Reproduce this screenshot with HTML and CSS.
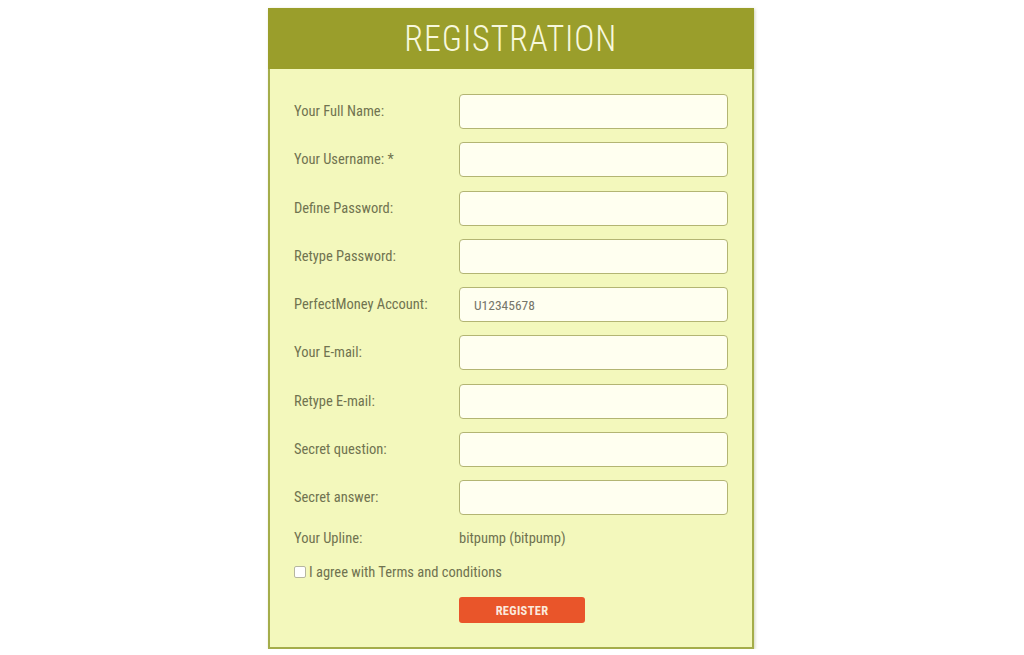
FILE: index.html
```html
<!DOCTYPE html>
<html lang="en">
<head>
  <meta charset="UTF-8" />
  <title>Registration</title>
  <link rel="stylesheet" href="styles.css">
</head>
<body>

  <div class="register-box">
    <div class="register-head">
      <h1>REGISTRATION</h1>
    </div>

    <form class="register-form">
      <div class="row">
        <label>Your Full Name:</label>
        <input type="text" class="field">
      </div>
      <div class="row">
        <label>Your Username: *</label>
        <input type="text" class="field">
      </div>
      <div class="row">
        <label>Define Password:</label>
        <input type="password" class="field">
      </div>
      <div class="row">
        <label>Retype Password:</label>
        <input type="password" class="field">
      </div>
      <div class="row">
        <label>PerfectMoney Account:</label>
        <input type="text" class="field" placeholder="U12345678">
      </div>
      <div class="row">
        <label>Your E-mail:</label>
        <input type="text" class="field">
      </div>
      <div class="row">
        <label>Retype E-mail:</label>
        <input type="text" class="field">
      </div>
      <div class="row">
        <label>Secret question:</label>
        <input type="text" class="field">
      </div>
      <div class="row">
        <label>Secret answer:</label>
        <input type="text" class="field">
      </div>
      <div class="row row-text">
        <label>Your Upline:</label>
        <span class="upline">bitpump (bitpump)</span>
      </div>

      <label class="agree">
        <input type="checkbox" class="check">
        <span>I agree with Terms and conditions</span>
      </label>

      <div class="row row-btn">
        <span></span>
        <button type="button" class="btn">REGISTER</button>
      </div>
    </form>
  </div>

</body>
</html>
```

FILE: styles.css
```css
body {
  margin: 0;
  padding: 8px 2px 0 0;
  background: #ffffff;
  font-family: "Liberation Sans Narrow", "Roboto Condensed", Roboto, sans-serif;
}

.register-box {
  width: 482px;
  margin: 0 auto;
  border: 2px solid #a4ad4a;
  border-top: none;
  background: #f3f8bc;
  box-shadow: 1px 1px 3px rgba(120, 130, 60, 0.35);
}

.register-head {
  background: #9a9e2b;
  height: 61px;
  margin: 0 -2px;
  display: flex;
  align-items: center;
  justify-content: center;
}

.register-head h1 {
  margin: 0;
  font-weight: 300;
  font-size: 37px;
  letter-spacing: 1px;
  color: #f7f8dc;
  font-family: "Liberation Sans Narrow", "Roboto Condensed", Roboto, sans-serif;
  transform: scaleX(0.92);
}

.register-form {
  padding: 25px 24px 24px 24px;
}

.row {
  display: grid;
  grid-template-columns: 165px 269px;
  align-items: center;
  margin-bottom: 13.25px;
}

.row label {
  font-size: 14.5px;
  color: #707350;
}

.field {
  box-sizing: border-box;
  width: 269px;
  height: 35px;
  border: 1px solid #b3b573;
  border-radius: 4px;
  background: #fffff0;
  padding: 0 14px;
  font-family: inherit;
  font-size: 13.5px;
  color: #666;
  outline: none;
}

.field::placeholder {
  color: #76766a;
}

.row-text {
  height: 20px;
  margin-bottom: 14px;
}

.upline {
  font-size: 14.5px;
  color: #6f7250;
}

.agree {
  display: flex;
  align-items: center;
  gap: 3px;
  height: 20px;
  font-size: 14.5px;
  color: #6f7250;
  margin-bottom: 15px;
}

.check {
  appearance: none;
  margin: 0;
  width: 12px;
  height: 12px;
  border: 1px solid #b6b6a0;
  border-radius: 2px;
  background: #fff;
}

.row-btn {
  margin-bottom: 0;
}

.btn {
  width: 126px;
  height: 26px;
  border: none;
  border-radius: 3px;
  background: #e9552a;
  color: #fbe9dc;
  font-family: inherit;
  font-size: 12.5px;
  font-weight: bold;
  letter-spacing: 0.3px;
}
```
